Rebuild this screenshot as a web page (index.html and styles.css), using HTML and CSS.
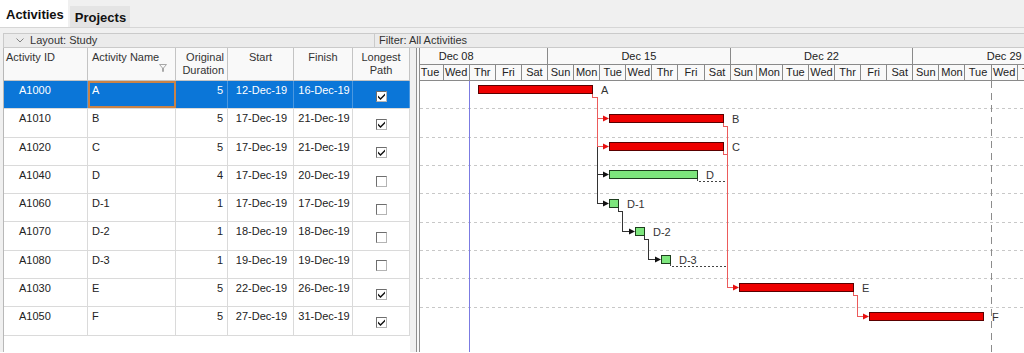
FILE: index.html
```
<!DOCTYPE html>
<html lang="en">
<head>
    <meta charset="UTF-8">
    <title>Activities</title>
    <link rel="stylesheet" href="styles.css">
</head>
<body>
<div class="tabs">
    <div class="tab active">Activities</div>
    <div class="tab">Projects</div>
</div>
<div class="panel">
    <div class="toolbar">
        <div class="layout">
            <svg class="chev" width="8" height="5" viewBox="0 0 8 5"><path d="M0.5 0.5 L4 4 L7.5 0.5"/></svg>
            Layout: Study
        </div>
        <div class="filter">Filter: All Activities</div>
    </div>
    <div class="views">
        <div class="table">
            <div class="thead">
                <div class="th">Activity ID</div>
                <div class="th name">Activity Name
                    <svg class="funnel" width="8" height="8" viewBox="0 0 8 8"><path d="M0.5 0.5 H7.5 L4.5 4 V7.5 H3.5 V4 Z"/></svg>
                </div>
                <div class="th right">Original<br>Duration</div>
                <div class="th center">Start</div>
                <div class="th center">Finish</div>
                <div class="th center">Longest<br>Path</div>
            </div>
            <!-- rows -->
            <div class="row sel">
                <div class="td id">A1000</div><div class="td focus">A</div><div class="td right">5</div>
                <div class="td center">12-Dec-19</div><div class="td center">16-Dec-19</div>
                <div class="td check"><span class="cb on"><svg viewBox="0 0 9 9"><path d="M1 3.5 L3.5 6 L8 1.5 V3.5 L3.5 8 L1 5.5 Z"/></svg></span></div>
            </div>
            <div class="row">
                <div class="td id">A1010</div><div class="td">B</div><div class="td right">5</div>
                <div class="td center">17-Dec-19</div><div class="td center">21-Dec-19</div>
                <div class="td check"><span class="cb on"><svg viewBox="0 0 9 9"><path d="M1 3.5 L3.5 6 L8 1.5 V3.5 L3.5 8 L1 5.5 Z"/></svg></span></div>
            </div>
            <div class="row">
                <div class="td id">A1020</div><div class="td">C</div><div class="td right">5</div>
                <div class="td center">17-Dec-19</div><div class="td center">21-Dec-19</div>
                <div class="td check"><span class="cb on"><svg viewBox="0 0 9 9"><path d="M1 3.5 L3.5 6 L8 1.5 V3.5 L3.5 8 L1 5.5 Z"/></svg></span></div>
            </div>
            <div class="row">
                <div class="td id">A1040</div><div class="td">D</div><div class="td right">4</div>
                <div class="td center">17-Dec-19</div><div class="td center">20-Dec-19</div>
                <div class="td check"><span class="cb"></span></div>
            </div>
            <div class="row">
                <div class="td id">A1060</div><div class="td">D-1</div><div class="td right">1</div>
                <div class="td center">17-Dec-19</div><div class="td center">17-Dec-19</div>
                <div class="td check"><span class="cb"></span></div>
            </div>
            <div class="row">
                <div class="td id">A1070</div><div class="td">D-2</div><div class="td right">1</div>
                <div class="td center">18-Dec-19</div><div class="td center">18-Dec-19</div>
                <div class="td check"><span class="cb"></span></div>
            </div>
            <div class="row">
                <div class="td id">A1080</div><div class="td">D-3</div><div class="td right">1</div>
                <div class="td center">19-Dec-19</div><div class="td center">19-Dec-19</div>
                <div class="td check"><span class="cb"></span></div>
            </div>
            <div class="row">
                <div class="td id">A1030</div><div class="td">E</div><div class="td right">5</div>
                <div class="td center">22-Dec-19</div><div class="td center">26-Dec-19</div>
                <div class="td check"><span class="cb on"><svg viewBox="0 0 9 9"><path d="M1 3.5 L3.5 6 L8 1.5 V3.5 L3.5 8 L1 5.5 Z"/></svg></span></div>
            </div>
            <div class="row">
                <div class="td id">A1050</div><div class="td">F</div><div class="td right">5</div>
                <div class="td center">27-Dec-19</div><div class="td center">31-Dec-19</div>
                <div class="td check"><span class="cb on"><svg viewBox="0 0 9 9"><path d="M1 3.5 L3.5 6 L8 1.5 V3.5 L3.5 8 L1 5.5 Z"/></svg></span></div>
            </div>
        </div>
        <div class="splitter"></div>
        <div class="gantt">
            <div class="timescale">
                <div class="weeks">
                    <div class="week">Dec 08</div><div class="week">Dec 15</div>
                    <div class="week">Dec 22</div><div class="week">Dec 29</div>
                </div>
                <div class="days">
                    <div class="day">Tue</div><div class="day">Wed</div><div class="day">Thr</div><div class="day">Fri</div><div class="day">Sat</div>
                    <div class="day">Sun</div><div class="day">Mon</div><div class="day">Tue</div><div class="day">Wed</div><div class="day">Thr</div><div class="day">Fri</div><div class="day">Sat</div>
                    <div class="day">Sun</div><div class="day">Mon</div><div class="day">Tue</div><div class="day">Wed</div><div class="day">Thr</div><div class="day">Fri</div><div class="day">Sat</div>
                    <div class="day">Sun</div><div class="day">Mon</div><div class="day">Tue</div><div class="day">Wed</div><div class="day">Thr</div>
                </div>
            </div>
            <svg class="chart" width="604" height="271" viewBox="0 0 604 271">
                <!-- row separators -->
                <g class="grid">
                    <path d="M0 27.5 H604 M0 56.5 H604 M0 84.5 H604 M0 112.5 H604 M0 141.5 H604 M0 169.5 H604 M0 197.5 H604 M0 226.5 H604"/>
                </g>
                <line class="datadate" x1="49.5" y1="0" x2="49.5" y2="271"/>
                <line class="finish" x1="571.5" y1="0" x2="571.5" y2="271"/>

                <!-- relationships -->
                <g class="rel crit">
                    <path d="M172.5 13 V16.5 H177.5 V65.5 M177.5 37.5 H183 M177.5 65.5 H183"/>
                    <path d="M303.5 42 V45.5 H307.5 V206.5 H313 M303.5 70 V73.5 H307.5"/>
                    <path d="M433.5 211 V214.5 H437.5 V235.5 H443"/>
                </g>
                <g class="rel norm">
                    <path d="M177.5 65.5 V122.5 M177.5 93.5 H183 M177.5 122.5 H183"/>
                    <path d="M198.5 127 V130.5 H202.5 V150.5 H209"/>
                    <path d="M224.5 155 V158.5 H228.5 V178.5 H235"/>
                </g>
                <g class="float">
                    <path d="M277.5 98 V100.5 H307 M250.5 183 V185.5 H307"/>
                </g>
                <g class="arrow crit">
                    <polygon points="189,37.5 183,34.5 183,40.5"/>
                    <polygon points="189,65.5 183,62.5 183,68.5"/>
                    <polygon points="319,206.5 313,203.5 313,209.5"/>
                    <polygon points="449,235.5 443,232.5 443,238.5"/>
                </g>
                <g class="arrow norm">
                    <polygon points="189,93.5 183,90.5 183,96.5"/>
                    <polygon points="189,122.5 183,119.5 183,125.5"/>
                    <polygon points="215,150.5 209,147.5 209,153.5"/>
                    <polygon points="241,178.5 235,175.5 235,181.5"/>
                </g>

                <!-- bars -->
                <rect class="bar crit" x="58.5" y="4.5" width="114" height="8"/>
                <rect class="bar crit" x="189.5" y="33.5" width="114" height="8"/>
                <rect class="bar crit" x="189.5" y="61.5" width="114" height="8"/>
                <rect class="bar norm" x="189.5" y="89.5" width="88" height="8"/>
                <rect class="bar norm" x="189.5" y="118.5" width="9" height="8"/>
                <rect class="bar norm" x="215.5" y="146.5" width="9" height="8"/>
                <rect class="bar norm" x="241.5" y="174.5" width="9" height="8"/>
                <rect class="bar crit" x="319.5" y="202.5" width="114" height="8"/>
                <rect class="bar crit" x="449.5" y="231.5" width="114" height="8"/>

                <g class="labels">
                    <text x="181" y="13">A</text>
                    <text x="312" y="42">B</text>
                    <text x="312" y="70">C</text>
                    <text x="286" y="98">D</text>
                    <text x="207" y="127">D-1</text>
                    <text x="233" y="155">D-2</text>
                    <text x="259" y="183">D-3</text>
                    <text x="442" y="211">E</text>
                    <text x="572" y="240">F</text>
                </g>
            </svg>
        </div>
    </div>
</div>
</body>
</html>
```

FILE: styles.css
```
*{
    box-sizing: border-box;
}
body{
    margin: 0;
    width: 1024px;
    height: 353px;
    overflow: hidden;
    background-color: #fff;
    font: 11px "Liberation Sans", Arial, sans-serif;
    color: #222;
}

/* tabs */
.tabs{
    display: flex;
    height: 28px;
    background-color: #f0f0f0;
    border-bottom: 1px solid #d6d6d6;
}
.tab{
    font-size: 13px;
    font-weight: bold;
    line-height: 13px;
    color: #111;
    margin: 6px 0 0 2px;
    padding: 5px 4px 0 5px;
    height: 21px;
    background-color: #e4e4e4;
}
.tab.active{
    margin: 0;
    height: 27px;
    padding: 8px 4px 0 6px;
    background-color: #fff;
}

.panel{
    background-color: #f0f0f0;
    padding: 5px 0 0 3px;
}

/* layout / filter bar */
.toolbar{
    display: flex;
    height: 15px;
    line-height: 13px;
    background-color: #ebebeb;
    border-top: 1px solid #cacaca;
    border-bottom: 1px solid #cacaca;
    color: #333;
}
.layout{
    width: 372px;
    padding-left: 12px;
    border-right: 1px solid #cacaca;
    border-left: 1px solid #cacaca;
}
.chev{
    margin-right: 3px;
    vertical-align: 1px;
}
.chev path{
    fill: none;
    stroke: #808080;
}
.filter{
    flex: 1;
    padding-left: 4px;
}

.views{
    display: flex;
    height: 304px;
}

/* activity table */
.table{
    width: 407px;
    background-color: #fff;
    border-left: 1px solid #b8b8b8;
}
.thead,.row{
    display: grid;
    grid-template-columns: 84px 88px 52px 66px 59px 57px;
}
.thead{
    height: 33px;
    background-color: #f9f9f9;
    border-bottom: 1px solid #c4c4c4;
    line-height: 13px;
    color: #333;
}
.th{
    padding: 3px 3px 0 2px;
    border-right: 1px solid #c4c4c4;
}
.th.center{
    padding: 3px 0 0;
}
.th.name{
    display: flex;
    flex-direction: column;
    padding-left: 4px;
}
.funnel{
    align-self: flex-end;
    margin: auto 5px 9px 0;
}
.funnel path{
    fill: none;
    stroke: #a8a8a8;
}
.right{
    text-align: right;
}
.center{
    text-align: center;
}
.row{
    height: 28.3px;
    border-bottom: 1px solid #dadada;
    line-height: 13px;
}
.td{
    padding: 3px 4px 0;
    border-right: 1px solid #dadada;
}
.td.id{
    padding-left: 15px;
}
.td.center{
    padding-left: 2px;
    padding-right: 0;
}
.td.check{
    display: flex;
    align-items: center;
    justify-content: center;
    padding: 3px 0 0;
}
.row.sel{
    background-color: #0b76d8;
    color: #fff;
}
.row.sel .td{
    border-right-color: #4b98e0;
}
.td.focus{
    outline: 2px solid #c98347;
    outline-offset: -2px;
}
.cb{
    display: block;
    width: 11px;
    height: 11px;
    border: 1px solid;
    border-color: #6e6e6e #b4b4b4 #b4b4b4 #6e6e6e;
    background-color: #fff;
}
.cb svg{
    display: block;
    width: 9px;
    height: 9px;
}
.cb path{
    fill: #111;
}

.splitter{
    width: 10px;
    background: linear-gradient(to right, #f0f0f0 6px, #8e8e8e 6px 7px, #f8f8f8 7px 9px, #8e8e8e 9px);
}

/* gantt */
.gantt{
    flex: 1;
    overflow: hidden;
    background-color: #fff;
}
.timescale{
    height: 33px;
    background-color: #f9f9f9;
    color: #222;
}
.weeks,.days{
    display: flex;
    border-bottom: 1px solid #8a8a8a;
}
/* week labels are centred on the whole week, so the first one starts off-screen */
.weeks{
    height: 17px;
    line-height: 16px;
    margin-left: -54.7px;
}
.days{
    height: 16px;
    line-height: 15px;
    margin-left: -2.5px;
}
.week{
    flex: none;
    width: 182.7px;
    text-align: center;
    border-right: 1px solid #8a8a8a;
}
.day{
    flex: none;
    width: 26.1px;
    text-align: center;
    border-right: 1px solid #8a8a8a;
}
.chart{
    display: block;
}
.grid path{
    stroke: #c8c8c8;
    stroke-dasharray: 3 3;
    shape-rendering: crispEdges;
}
.datadate{
    stroke: #7b7be2;
    shape-rendering: crispEdges;
}
.finish{
    stroke: #8c8c8c;
    stroke-dasharray: 7 5;
    shape-rendering: crispEdges;
}
.rel path{
    fill: none;
    shape-rendering: crispEdges;
}
.rel.crit path{
    stroke: #ec5b5b;
}
.rel.norm path{
    stroke: #333;
}
.float path{
    fill: none;
    stroke: #444;
    stroke-dasharray: 2 2;
    shape-rendering: crispEdges;
}
.arrow.crit polygon{
    fill: #e81010;
}
.arrow.norm polygon{
    fill: #111;
}
.bar{
    shape-rendering: crispEdges;
}
.bar.crit{
    fill: #ee0000;
    stroke: #5a0000;
}
.bar.norm{
    fill: #7de67d;
    stroke: #1d3d1d;
}
.labels text{
    font: 11px "Liberation Sans", Arial, sans-serif;
    fill: #333;
}
```
